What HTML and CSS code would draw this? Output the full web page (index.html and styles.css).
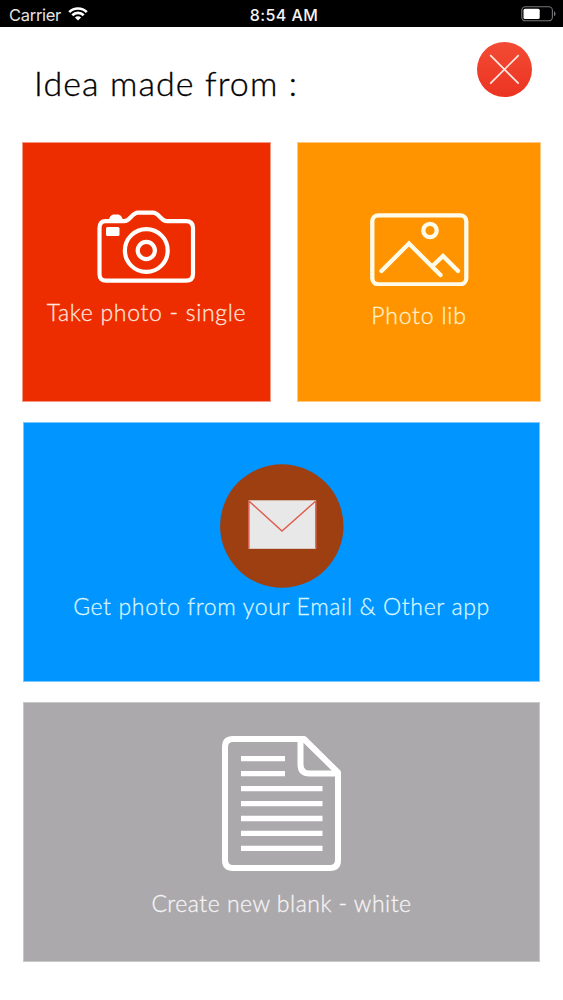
FILE: index.html
```html
<!DOCTYPE html>
<html lang="en">
<head>
<meta charset="utf-8">
<title>Idea made from</title>
<link rel="stylesheet" href="styles.css">
</head>
<body>
<div class="status">
  <div class="carrier"><span class="carrier-name">Carrier</span>
    <svg class="wifi" width="20" height="14" viewBox="0 0 20 14" fill="none" stroke="#fff" stroke-width="2.7"><path d="M1.2 5.1a12.6 12.6 0 0 1 17.6 0M4.3 8.3a8.1 8.1 0 0 1 11.4 0"/><path d="M10 13.6 6.9 10.5a4.4 4.4 0 0 1 6.2 0z" fill="#fff" stroke="none"/></svg>
  </div>
  <span class="time">8:54 AM</span>
  <svg class="battery" width="36" height="16" viewBox="0 0 36 16"><rect x=".8" y=".8" width="30.6" height="14" rx="3.6" fill="none" stroke="#77777c" stroke-width="1.1"/><rect x="2.5" y="2.7" width="16.2" height="10.3" rx="1.5" fill="#fff"/><path d="M33 5.3c2 .8 2 4.2 0 5z" fill="#77777c"/></svg>
</div>
<header class="header">
  <h1 class="title">Idea made from :</h1>
  <button class="close" aria-label="Close"><svg width="55" height="55" viewBox="0 0 55 55"><path d="M13.2 13.2 41.7 41.7M41.7 13.2 13.2 41.7" stroke="#ffe9e2" stroke-width="1.7"/></svg></button>
</header>
<main class="tiles">
  <div class="row">
    <a class="tile red">
      <svg width="100" height="74" viewBox="0 0 100 74" fill="none" stroke="#fff" stroke-width="4.2"><path d="M8.500 12.200H27C33 12.200 35 3.700 41 3.700H56C62 3.700 64 12.200 70 12.200H89Q96 12.200 96 19V65Q96 71.600 89 71.600H9Q2.500 71.600 2.500 65V19Q2.500 12.200 8.500 12.200Z"/><path d="M11.500 12c1-5 3-6.500 6-6.500h3c3 0 5 2.500 5.500 6.500z" fill="#fff" stroke="none"/><rect x="9" y="18" width="13.500" height="9" rx="1.500" fill="#fff" stroke="none"/><circle cx="49.300" cy="41.500" r="21.400"/><circle cx="49.300" cy="41.500" r="8.600"/></svg>
      <span class="label l-photo">Take photo - single</span>
    </a>
    <a class="tile orange">
      <svg width="100" height="74" viewBox="0 0 100 74" fill="none" stroke="#fffbea" stroke-width="4.300"><rect x="3.300" y="3.300" width="94" height="69" rx="6"/><circle cx="61" cy="18.500" r="6.700"/><path d="M12.500 59 40 31.500 71.500 63M63.500 54 74 44 89 59" stroke-linecap="round" stroke-linejoin="miter"/></svg>
      <span class="label l-lib">Photo lib</span>
    </a>
  </div>
  <a class="tile blue">
    <svg width="124" height="124" viewBox="0 0 124 124"><circle cx="61.800" cy="62" r="61.700" fill="#9d3f10"/><rect x="28.600" y="36.300" width="67.500" height="48.500" fill="#e8e8e9"/><path d="M28.900 37V84.500M95.800 37V84.500M28.900 37 62 67 95.800 37" fill="none" stroke="#df5b4b" stroke-width="1.400"/></svg>
    <span class="label l-email">Get photo from your Email &amp; Other app</span>
  </a>
  <a class="tile gray">
    <svg width="122" height="136" viewBox="0 0 122 136" fill="none" stroke="#fff" stroke-width="6"><path d="M83 3H12Q4 3 4 11V124Q4 132 12 132H109Q117 132 117 124V36.500Z" stroke-linejoin="round"/><path d="M79.500 4V28.500Q79.500 37.500 88.500 37.500H117"/><path d="M20 22.700H64M20 37.700H64M20 52.600H101.500M20 67.600H101.500M20 82.500H101.500M20 97.400H101.500M20 112.300H101.500" stroke-width="5.300"/></svg>
    <span class="label l-blank">Create new blank - white</span>
  </a>
</main>
</body>
</html>
```
FILE: styles.css
```css
* { box-sizing: border-box; }
body { margin: 0; width: 563px; height: 1000px; overflow: hidden; background: #fff; font-family: Lato, sans-serif; }
.status { display: grid; grid-template-columns: 1fr auto 1fr; align-items: center; height: 27px; padding: 2px 6px 0 9px; background: #000; color: #fff; font: 17px/24px Inter, sans-serif; }
.carrier { display: flex; align-items: center; gap: 7px; color: #e4e4e4; }
.carrier-name { font-size: 16.5px; letter-spacing: -.3px; }
.wifi { margin-top: -2px; }
.time { position: relative; left: 1px; font-size: 16px; font-weight: 500; letter-spacing: .4px; color: #f4f4f4; }
.battery { justify-self: end; margin-top: -2px; }
.header { display: flex; justify-content: space-between; height: 115px; padding: 15px 31px 0 34px; }
.title { margin: 19px 0 0; font-size: 34px; line-height: 44px; font-weight: 300; letter-spacing: 1.1px; color: #000; white-space: nowrap; -webkit-text-stroke: .35px #000; }
.close { width: 55px; height: 55px; padding: 0; border: 0; border-radius: 50%; background: linear-gradient(#f34b35, #eb3422); }
.close svg { display: block; }
.tiles { display: flex; flex-direction: column; gap: 20px; padding: 0 22px 0 23px; }
.row { display: flex; justify-content: space-between; margin-left: -1px; }
.tile { display: flex; flex-direction: column; align-items: center; height: 260px; border: 1px solid; background-clip: padding-box; color: #fff; }
.red { width: 249px; padding-top: 66px; background-color: #ed2c00; border-color: #f79a84; }
.orange { width: 244px; padding-top: 69px; background-color: #ff9400; border-color: #ffca80; }
.blue { width: 517px; padding-top: 41px; background-color: #0095ff; border-color: #79c8ff; }
.gray { width: 517px; padding-top: 33px; background-color: #aba9ab; border-color: #c9c7c9; }
.label { font-size: 23px; line-height: 30px; font-weight: 300; white-space: nowrap; -webkit-text-stroke: .3px currentColor; }
.l-photo { margin-top: 14px; letter-spacing: .7px; color: #ffe5dc; }
.l-lib { margin-top: 14px; letter-spacing: .8px; color: #fff1c9; }
.l-email { margin-top: 3px; letter-spacing: .64px; color: #d8f6ff; }
.l-blank { margin-top: 16px; letter-spacing: .5px; color: #f6f4f6; }
```
